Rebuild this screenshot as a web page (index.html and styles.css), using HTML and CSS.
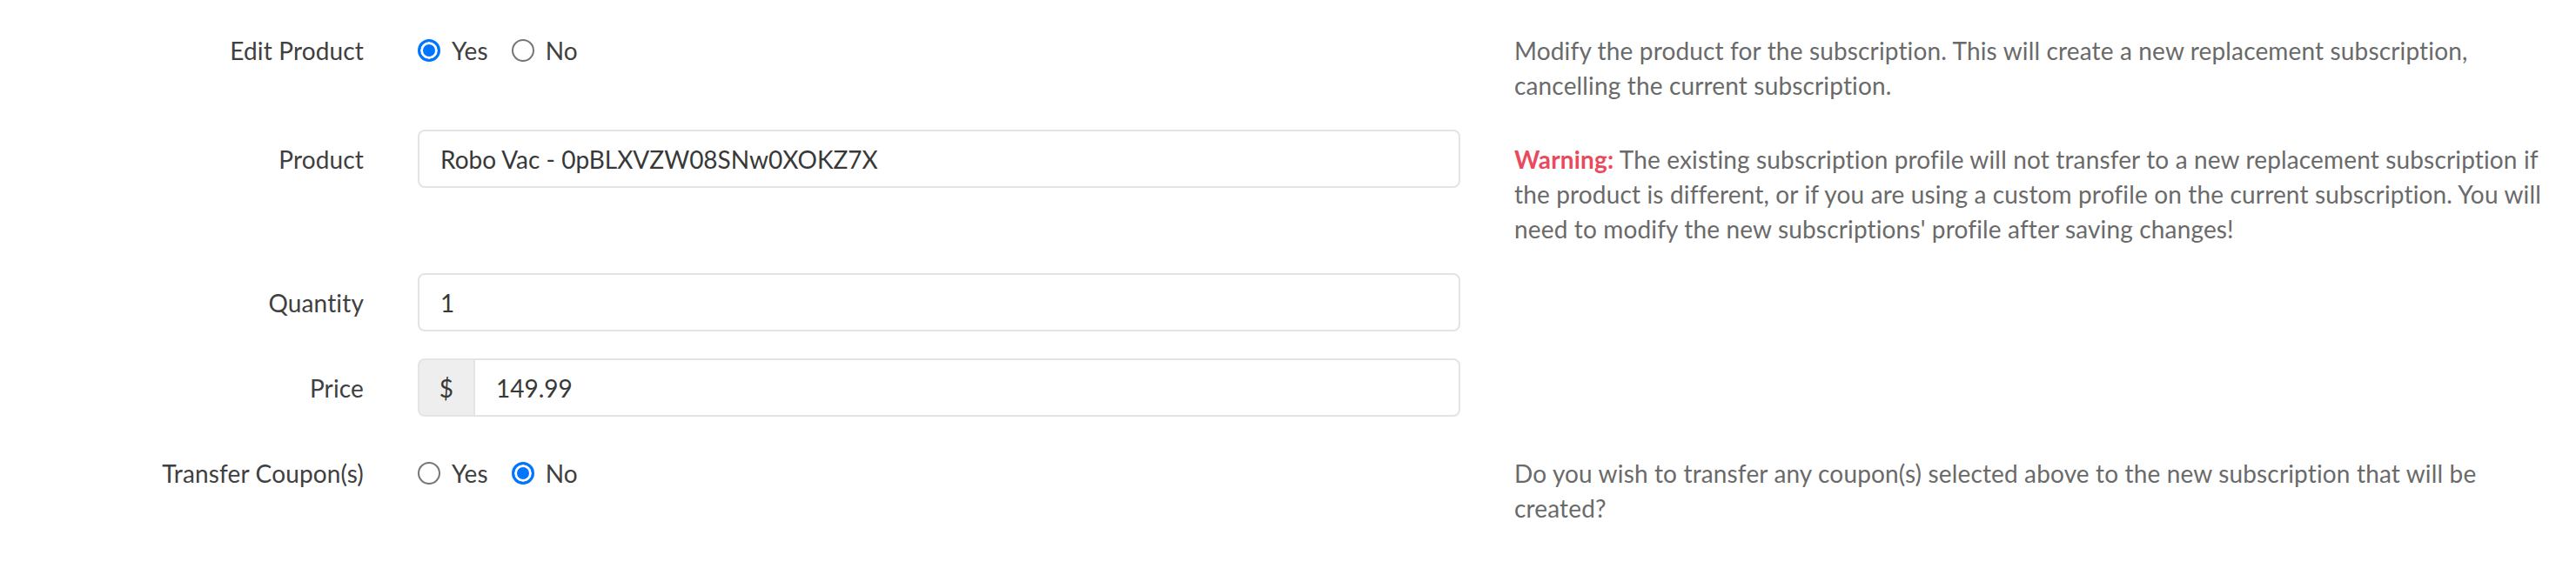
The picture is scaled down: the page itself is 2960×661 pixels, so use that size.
FILE: index.html
```html
<!DOCTYPE html>
<html lang="en">
<head>
    <meta charset="UTF-8">
    <meta name="viewport" content="width=device-width, initial-scale=1.0">
    <title>Edit Subscription</title>
    <link rel="stylesheet" href="styles.css">
</head>
<body>

    <form class="sub-form">
        <div class="form-row">
            <label class="row-label">Edit Product</label>
            <div class="radio-group">
                <label class="radio"><input type="radio" name="edit_product" value="1" checked> Yes</label>
                <label class="radio"><input type="radio" name="edit_product" value="0"> No</label>
            </div>
            <p class="help">Modify the product for the subscription. This will create a new replacement subscription, cancelling the current subscription.</p>
        </div>

        <div class="form-row">
            <label class="row-label" for="product">Product</label>
            <input class="field" type="text" id="product" value="Robo Vac - 0pBLXVZW08SNw0XOKZ7X">
            <p class="help"><strong class="warn">Warning:</strong> The existing subscription profile will not transfer to a new replacement subscription if the product is different, or if you are using a custom profile on the current subscription. You will need to modify the new subscriptions' profile after saving changes!</p>
        </div>

        <div class="form-row">
            <label class="row-label" for="quantity">Quantity</label>
            <input class="field" type="text" id="quantity" value="1">
        </div>

        <div class="form-row">
            <label class="row-label" for="price">Price</label>
            <div class="input-group">
                <span class="addon">$</span>
                <input class="field" type="text" id="price" value="149.99">
            </div>
        </div>

        <div class="form-row">
            <label class="row-label">Transfer Coupon(s)</label>
            <div class="radio-group">
                <label class="radio"><input type="radio" name="transfer_coupons" value="1"> Yes</label>
                <label class="radio"><input type="radio" name="transfer_coupons" value="0" checked> No</label>
            </div>
            <p class="help">Do you wish to transfer any coupon(s) selected above to the new subscription that will be created?</p>
        </div>
    </form>

</body>
</html>
```

FILE: styles.css
```css
body {
    margin: 0;
    font-family: 'Lato', 'Open Sans', sans-serif;
    font-size: 28px;
    line-height: 40px;
    letter-spacing: 0.15px;
    color: #444;
    background: #fff;
}

.sub-form {
    display: flex;
    flex-direction: column;
    gap: 31px;
    padding-top: 24px;
}

.form-row {
    display: grid;
    grid-template-columns: 418px 1198px 1190px;
    column-gap: 62px;
    align-items: start;
}

.form-row > .help {
    grid-column: 3;
}

.row-label {
    padding-top: 14px;
    text-align: right;
    color: #404040;
}

/* yes / no toggles */
.radio-group {
    display: flex;
    gap: 27px;
    padding-top: 14px;
}

.radio {
    display: flex;
    align-items: center;
    gap: 13px;
    color: #404040;
}

.radio input {
    appearance: none;
    -webkit-appearance: none;
    margin: 0;
    width: 26px;
    height: 26px;
    border: 2px solid #767676;
    border-radius: 50%;
    background: #fff;
    box-sizing: border-box;
}

.radio input:checked {
    border: 3px solid #0075ff;
    background: #0075ff;
    box-shadow: inset 0 0 0 3px #fff;
}

.help {
    margin: 0;
    padding-top: 14px;
    color: #6a6a6a;
}

.warn {
    color: #ea4a5d;
    font-weight: 700;
}

.field {
    box-sizing: border-box;
    width: 100%;
    height: 67px;
    margin: 0;
    padding: 0 24px;
    border: 2px solid #e4e4e4;
    border-radius: 8px;
    font: inherit;
    color: #383838;
    background: #fff;
    outline: none;
}

.input-group {
    display: flex;
}

.input-group .field {
    flex: 1;
    border-radius: 0 8px 8px 0;
}

.addon {
    box-sizing: border-box;
    width: 64px;
    height: 67px;
    display: flex;
    align-items: center;
    justify-content: center;
    background: #eee;
    border: 2px solid #e4e4e4;
    border-right: none;
    border-radius: 8px 0 0 8px;
    color: #383838;
}
```
